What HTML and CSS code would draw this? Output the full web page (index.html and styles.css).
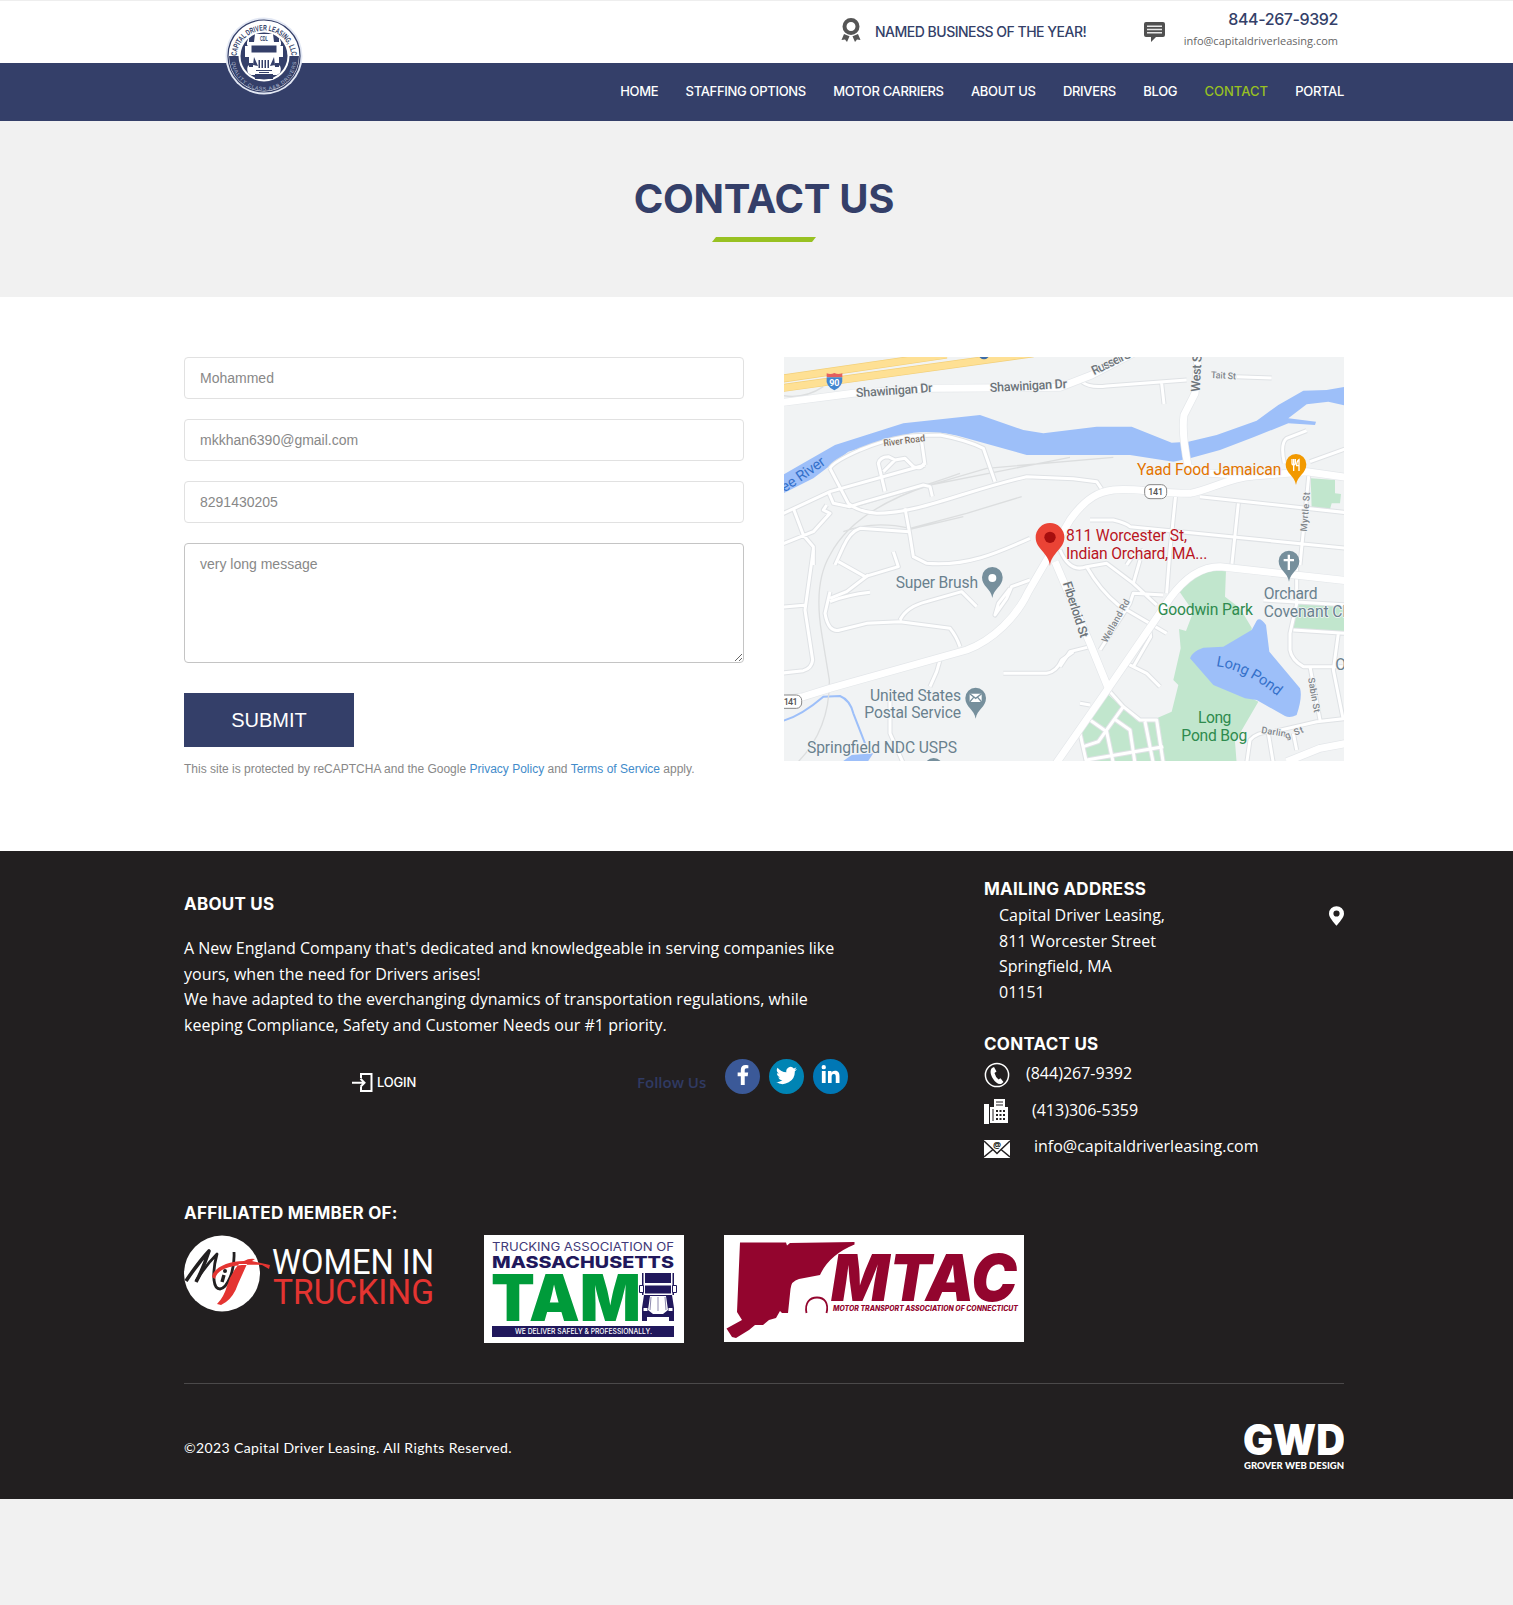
FILE: index.html
```html
<!DOCTYPE html>
<html lang="en">
<head>
<meta charset="utf-8">
<title>Contact Us - Capital Driver Leasing</title>
<link rel="stylesheet" href="styles.css">
</head>
<body>
<header class="header">
  <div class="topbar wrap">
    <a class="brand" href="#" aria-label="Capital Driver Leasing">
      <svg width="78" height="78" viewBox="0 0 78 78">
        <defs>
          <path id="arc-top" d="M11.500 41A27.500 27.500 0 0 1 66.500 41"/>
          <path id="arc-bottom" d="M6.500 41A32.500 32.500 0 0 0 71.500 41"/>
        </defs>
        <circle cx="39" cy="39" r="38.500" fill="#e3e8f4"/>
        <circle cx="39" cy="39" r="36" fill="#fff" stroke="#343f69" stroke-width="1.200"/>
        <path d="M4 39a35 35 0 0 0 70 0z" fill="#343f69"/>
        <circle cx="39" cy="39" r="25.500" fill="#fff"/>
        <circle cx="39" cy="39" r="23.500" fill="#343f69"/>
        <path d="M30 17h18l1 8h5v-5l2 5v3l-2 2v18q3 2 1 8l-3 2h-4l-2 4H32l-2-4h-4l-3-2q-2-6 1-8V30l-2-2v-3l2-5v5h5zM20 29h4v11h-4zM54 29h4v11h-4z" fill="#fff"/>
        <path d="M26.500 28.500h25v7h-25zM29 40l4 9-5-1zM49 40l-4 9 5-1zM33.500 43H35v8h-1.500zM36.500 43H38v8h-1.500zM39.500 43H41v8h-1.500zM42.500 43H44v8h-1.500zM31 53h16v1H31zM34 55h10v1H34zM30 57h18v5H30zM24 46h4v4h-4zM50 46h4v4h-4z" fill="#343f69"/>
        <text x="39" y="24" class="brand-cdl" text-anchor="middle" textLength="8" lengthAdjust="spacingAndGlyphs">CDL</text>
        <text class="brand-top"><textPath href="#arc-top" startOffset="2" textLength="82" lengthAdjust="spacingAndGlyphs">CAPITAL DRIVER LEASING, LLC</textPath></text>
        <text class="brand-bottom"><textPath href="#arc-bottom" startOffset="4" textLength="94">QUALITY CLASS A&amp;B DRIVERS</textPath></text>
      </svg>
    </a>
    <div class="award">
      <svg width="20" height="25" viewBox="0 0 20 25" fill="#555"><path fill-rule="evenodd" d="M10 0a8.500 8.500 0 1 0 0 17 8.500 8.500 0 0 0 0-17m0 4a4.500 4.500 0 1 1 0 9 4.500 4.500 0 0 1 0-9M3 16l5.500 2.300L6 24l-2-2.500L.5 22zM17 16l-5.500 2.300L14 24l2-2.500 3.500.5z"/></svg>
      <span class="award-text">NAMED BUSINESS OF THE YEAR!</span>
    </div>
    <svg class="chat" width="21" height="20" viewBox="0 0 21 20"><path d="M2 0h17a2 2 0 0 1 2 2v11a2 2 0 0 1-2 2h-7l-5 5v-5H2a2 2 0 0 1-2-2V2a2 2 0 0 1 2-2" fill="#505050"/><path d="M3 4.200h15M3 7.500h15M3 10.800h15" stroke="#e8e8e8" stroke-width="1.500"/></svg>
    <div class="reach"><a class="phone" href="#">844-267-9392</a><a class="mail" href="#">info@capitaldriverleasing.com</a></div>
  </div>
  <div class="navbar">
    <nav class="nav wrap">
      <a href="#">HOME</a><a href="#">STAFFING OPTIONS</a><a href="#">MOTOR CARRIERS</a><a href="#">ABOUT US</a><a href="#">DRIVERS</a><a href="#">BLOG</a><a href="#" class="active">CONTACT</a><a href="#">PORTAL</a>
    </nav>
  </div>
</header>

<section class="hero">
  <h1>CONTACT US</h1>
  <div class="hero-bar"></div>
</section>

<main class="main">
  <div class="contact wrap">
    <form class="form">
      <input type="text" value="Mohammed" aria-label="Name">
      <input type="text" value="mkkhan6390@gmail.com" aria-label="Email">
      <input type="text" value="8291430205" aria-label="Phone">
      <textarea aria-label="Message">very long message</textarea>
      <button type="button">SUBMIT</button>
      <p class="legal">This site is protected by reCAPTCHA and the Google <a href="#">Privacy Policy</a> and <a href="#">Terms of Service</a> apply.</p>
    </form>
    <svg class="map" width="560" height="404" viewBox="12 21 1680 1212">
      <defs>
        <g id="minor">
          <path d="M0 495L150 425 435 345M435 345L425 275M150 355L205 460Q235 485 290 490C420 490 560 420 740 380L880 386 950 395 970 425M150 355Q160 335 240 300C350 255 400 255 480 255Q560 270 610 295L645 395"/>
          <path d="M315 425L295 340Q300 320 325 320L345 330 375 325 400 350Q425 360 432 340M310 365L345 330M40 475L70 555 100 590V645M145 425L160 460 210 470 240 460 430 405 450 410 457 440M0 585L100 545 150 490 130 480 140 465M375 475L388 545 400 620 440 640C560 650 650 610 750 565"/>
          <path d="M388 545L240 535Q210 545 190 590L165 645M340 605L355 650 255 680 175 635M0 772L80 765M100 600L75 780 98 930Q95 955 70 962L0 970"/>
          <path d="M150 725L135 790Q145 850 180 840L260 820 360 815 510 835Q530 860 540 890M150 755Q200 735 270 727M360 810Q380 770 440 755L545 725 590 770M265 675L200 725 150 745M750 690L695 710 680 745 645 795 655 760 690 715M480 930L470 965 450 1010M670 970H800Q830 965 845 930L880 905M330 1020V1150L370 1240"/>
          <path d="M905 95Q930 115 980 108L1220 90M1145 100L1152 162M1370 80L1475 84M1580 242L1520 265Q1500 280 1513 340M1590 335L1700 295M1260 440L1700 488M1187 435L1170 600 1160 730M1375 460L1355 650M930 510H1000Q1040 520 1050 530L1700 595M1587 370L1560 645M1040 645L1060 615 1090 600"/>
          <path d="M840 600Q870 670 920 650L980 640 1060 700M920 650Q960 720 1015 765L1160 850M1080 630L1060 700 1130 765M960 900L1050 760 1060 730 1150 735M840 950L870 905 930 890M1040 940L1110 845 1112 860 1060 950M1040 940L1100 970 1140 1010M900 1060L930 1065"/>
          <path d="M1550 650V760L1530 850V900Q1535 930 1570 950L1700 950M1450 750L1700 765M1540 840L1700 850M1590 950L1620 1110M1675 850L1660 960 1690 1110M1400 1240L1410 1170Q1430 1145 1480 1145L1610 1115 1700 1105M1465 1150L1480 1240M1540 1150L1550 1200"/>
          <path d="M990 1025L1030 1070 1080 1110H1130L1150 1240M930 1110L980 1145 1000 1240M910 1190L955 1175 1030 1070M900 1150L920 1240M1000 1105L1050 1140 1065 1240M1095 1115L1120 1240M920 1230L1150 1190"/>
        </g>
        <g id="major">
          <path d="M0 1050L70 1040 150 1015 560 900C640 870 710 800 745 725L870 510C920 440 960 425 1000 420C1060 412 1120 430 1230 430C1290 420 1340 385 1420 378L1580 365 1700 382"/>
          <path d="M825 635L930 880 985 1015M825 1245L985 1015 1170 745C1220 675 1270 650 1320 650L1700 692"/>
          <path d="M0 158L220 130 460 115 840 112 935 75 1060 10M1255 10L1245 130 1212 195Q1204 250 1225 352L1290 370 1420 378M1520 1235L1620 1195 1700 1180"/>
        </g>
        <path id="pin" d="M0 0C-4-28-31-34-31-62a31 31 0 0 1 62 0C31-34 4-28 0 0z"/>
        <path id="arc-river" d="M14 427Q70 392 150 333"/>
        <path id="arc-pond" d="M1308 948Q1400 960 1500 1045"/>
      </defs>
      <path class="land" d="M0 0h1700v1250H0z"/>
      <g class="park">
        <path d="M1195 720C1240 675 1280 660 1338 660L1335 740 1380 775 1415 833V1045L1435 1055 1365 1175 1370 1240H1150L1130 1105 1175 1085 1195 1005 1180 990 1202 895 1197 837 1218 843 1240 785zM980 1030L1025 1070 1075 1115H1130L1145 1240H925L905 1145zM1592 385L1665 390V430L1683 432 1680 460H1655L1650 478 1595 475zM1545 760L1700 770V850L1540 835z"/>
      </g>
      <g class="water">
        <path d="M0 380L60 345 165 285 370 220 600 195 730 240 790 250 870 240 950 230H1055L1175 278 1225 275 1310 255 1430 212 1495 165 1570 122 1640 120 1700 110V168L1645 155 1580 163 1525 205 1608 215 1605 225 1525 220 1420 262 1320 300 1230 325 1180 335 1050 315H740L560 265Q480 240 400 248L290 280 205 305 100 385 0 435z"/>
        <path d="M1230 925Q1235 905 1270 893L1330 890 1415 840 1430 812Q1440 800 1458 825L1468 905 1560 1015Q1568 1040 1550 1095 1530 1105 1515 1098L1430 1050 1395 1045 1300 1005zM180 1240L215 1215 280 1210 260 1240z"/>
      </g>
      <path d="M0 1115Q60 1100 130 1040L180 1038Q210 1050 220 1090L255 1180" fill="none" stroke="#9dbff9" stroke-width="6"/>
      <g class="rail"><path d="M200 475Q400 420 540 370M210 475L620 355 1000 322M150 615Q220 480 450 405L870 322M190 545Q280 510 390 535L560 490 725 440M380 540L550 500M150 615Q100 700 125 850L148 990Q150 1140 50 1240M0 135Q70 150 130 110"/></g>
      <use href="#minor" class="minor-edge"/><use href="#minor" class="minor"/>
      <use href="#major" class="major-edge"/><use href="#major" class="major"/>
      <path d="M0 87L500 14M0 115L760 10" class="highway-edge"/><path d="M0 87L500 14M0 115L760 10" class="highway"/>
      <circle cx="612" cy="12" r="16" fill="#3c6ca8"/>
      <path d="M140 82h47q3 28-24 39-27-11-23-39" fill="#4285d0"/><path d="M140 70q12 5 23-1 12 6 24 1v11h-47z" fill="#e4605e"/>
      <text x="163" y="107" class="shield" text-anchor="middle">90</text>
      <g class="badge"><rect x="1094" y="404" width="66" height="42" rx="16"/><rect x="-4" y="1035" width="69" height="40" rx="16"/></g>
      <text x="1105" y="435" class="route" textLength="44">141</text><text x="11" y="1066" class="route" textLength="42">141</text>
      <g class="street">
        <text transform="translate(229 142) rotate(-4)" textLength="230">Shawinigan Dr</text>
        <text transform="translate(630 126) rotate(-3)" textLength="232">Shawinigan Dr</text>
        <text transform="translate(942 76) rotate(-26)" textLength="136">Russell St</text>
        <text transform="translate(1259 126) rotate(-87)" textLength="124">West St</text>
        <text transform="translate(848 700) rotate(72)" textLength="174">Fiberloid St</text>
      </g>
      <g class="lane">
        <text transform="translate(311 289) rotate(-7)" textLength="126" fill="#7b6d62">River Road</text>
        <text transform="translate(1292 84) rotate(3)" textLength="76">Tait St</text>
        <text transform="translate(1580 545) rotate(-85)" textLength="118">Myrtle St</text>
        <text transform="translate(980 880) rotate(-61)" textLength="144">Welland Rd</text>
        <text transform="translate(1584 985) rotate(80)" textLength="105">Sabin St</text>
        <text transform="translate(1443 1149) rotate(9)" textLength="74">Darlin</text><text transform="translate(1519 1168) rotate(-22)" textLength="58">g St</text>
      </g>
      <g class="river"><text><textPath href="#arc-river" textLength="152">ee River</textPath></text><text><textPath href="#arc-pond" textLength="208">Long Pond</textPath></text></g>
      <g class="place green"><text x="1133" y="795" textLength="286">Goodwin Park</text><text x="1254" y="1119" textLength="100">Long</text><text x="1204" y="1173" textLength="198">Pond Bog</text></g>
      <g class="place slate">
        <text x="347" y="715" textLength="247">Super Brush</text><text x="270" y="1052" textLength="273">United States</text><text x="253" y="1104" textLength="290">Postal Service</text><text x="81" y="1208" textLength="450">Springfield NDC USPS</text>
        <text x="1451" y="747" textLength="162">Orchard</text><text x="1451" y="800" textLength="262">Covenant Ch</text><text x="1666" y="960">O</text>
      </g>
      <text x="1071" y="376" class="place amber" textLength="433">Yaad Food Jamaican</text>
      <g class="place red"><text x="858" y="573" textLength="363">811 Worcester St,</text><text x="858" y="627" textLength="424">Indian Orchard, MA...</text></g>
      <g fill="#768f9c"><use href="#pin" x="637" y="744"/><use href="#pin" x="587" y="1106"/><use href="#pin" x="1527" y="695"/><circle cx="461" cy="1252" r="28"/></g>
      <circle cx="637" cy="684" r="12" fill="#fff"/>
      <path d="M569 1031h36v25h-36zM1523 614h7v13h12v7h-12v26h-7v-26h-12v-7h12z" fill="#fff"/><path d="M569 1031l18 14 18-14M569 1056l12-14M605 1056l-12-14" fill="none" stroke="#768f9c" stroke-width="4"/>
      <use href="#pin" x="1548" y="405" fill="#f29900"/>
      <path d="M1536 327v12q0 6 5 6v18M1541 327v18M1546 327v12q0 6-5 6M1557 363v-34q-7 4-7 18h7" fill="none" stroke="#fff" stroke-width="4"/>
      <path d="M810 648C806 608 767 598 767 562a43 43 0 0 1 86 0C853 598 814 608 810 648z" fill="#ea4335"/><circle cx="810" cy="562" r="17" fill="#a50e0e"/>
    </svg>
  </div>
</main>

<footer class="footer">
  <div class="wrap">
    <div class="foot-top">
      <section class="about">
        <h2>ABOUT US</h2>
        <p>A New England Company that's dedicated and knowledgeable in serving companies like<br>yours, when the need for Drivers arises!<br>We have adapted to the everchanging dynamics of transportation regulations, while<br>keeping Compliance, Safety and Customer Needs our #1 priority.</p>
        <div class="links">
          <a class="login" href="#"><svg width="21" height="20" viewBox="0 0 21 20" fill="none" stroke="#fff" stroke-width="2"><path d="M9 5V1h10.500v17H9v-4M0 9.700h12M8.500 5.700l4 4-4 4"/></svg><span>LOGIN</span></a>
          <span class="follow">Follow Us</span>
          <div class="social">
            <a class="fb" href="#" aria-label="Facebook"><svg width="20" height="20" viewBox="0 0 320 512" fill="#fff"><path d="M279 288l14-93h-89v-60c0-25 12-50 52-50h41V7s-37-7-72-7c-73 0-121 44-121 125v70H23v93h81v224h100V288z"/></svg></a>
            <a class="tw" href="#" aria-label="Twitter"><svg width="21" height="21" viewBox="0 0 24 24" fill="#fff"><path d="M24 4.600a10 10 0 0 1-2.800.8 5 5 0 0 0 2.200-2.700c-1 .6-2 1-3.100 1.200a4.900 4.900 0 0 0-8.400 4.500C7.800 8.200 4.200 6.200 1.700 3.200a4.900 4.900 0 0 0 1.500 6.500c-.8 0-1.600-.2-2.200-.6 0 2.300 1.600 4.400 3.900 4.900-.7.200-1.500.2-2.200.1a4.900 4.900 0 0 0 4.600 3.400A9.900 9.900 0 0 1 0 19.500 14 14 0 0 0 21.500 7.100c1-.7 1.800-1.600 2.500-2.500"/></svg></a>
            <a class="li" href="#" aria-label="LinkedIn"><svg width="19" height="18" viewBox="0 0 24 24" fill="#fff"><path d="M.5 8h5v16h-5zM3 0a2.900 2.900 0 1 1 0 5.800A2.900 2.900 0 0 1 3 0M8.600 8h4.700v2.200C14 8.800 15.600 7.600 18 7.600c5 0 6 3.300 6 7.600V24h-5v-7.800c0-1.900 0-4.200-2.600-4.200s-2.900 2-2.900 4.100V24H8.600z"/></svg></a>
          </div>
        </div>
      </section>
      <section class="info">
        <h2>MAILING ADDRESS</h2>
        <div class="address">
          <p>Capital Driver Leasing,<br>811 Worcester Street<br>Springfield, MA<br>01151</p>
          <svg width="15" height="20" viewBox="0 0 16 21" fill="#fff"><path fill-rule="evenodd" d="M8 0a8 8 0 0 0-8 8c0 4 5 9 8 13 3-4 8-9 8-13a8 8 0 0 0-8-8m0 4.500a3.300 3.300 0 1 1 0 6.600 3.300 3.300 0 0 1 0-6.600"/></svg>
        </div>
        <h2 class="reach-title">CONTACT US</h2>
        <ul>
          <li class="tel"><svg width="26" height="26" viewBox="0 0 26 26"><circle cx="13" cy="13" r="11.600" fill="none" stroke="#fff" stroke-width="1.500"/><path d="M8 6l2-1 2.500 4.500-2 1.500q1 4 4 6.500l2-1.200 3 3.700-2 1.800c-3 1-6-1-8.500-5C6 12 6 8 8 6" fill="#fff"/></svg><span>(844)267-9392</span></li>
          <li class="fax"><svg width="25" height="25" viewBox="0 0 25 25"><path d="M0 5h5v20H0zM6 8h4V0h11v8h3v16H6z" fill="#fff"/><path d="M12 3h7M12 6h7M9 10v12" stroke="#221f20"/><path d="M12 12h9M12 16h9M12 20h9" stroke="#221f20" stroke-width="2" stroke-dasharray="2 1.500"/></svg><span>(413)306-5359</span></li>
          <li class="email"><svg width="26" height="18" viewBox="0 0 26 18"><path d="M0 0h26v18H0z" fill="#fff"/><path d="M0 1l10 9.500 3 3 3-3L26 1M0 17l9-7.500M26 17l-9-7.500" fill="none" stroke="#221f20" stroke-width="1.500"/><text x="13" y="8" text-anchor="middle" class="at">@</text></svg><span>info@capitaldriverleasing.com</span></li>
        </ul>
      </section>
    </div>

    <h2 class="member-title">AFFILIATED MEMBER OF:</h2>
    <div class="members">
      <svg class="wit" width="251" height="78" viewBox="0 0 251 78">
        <circle cx="38" cy="38.500" r="38" fill="#fff"/>
        <path d="M2 46Q14 28 25 16q-6 18-13 31" fill="none" stroke="#221f20" stroke-width="3.600" stroke-linejoin="round"/>
        <path d="M12 46Q22 30 33 19q-4 14-3 26 1 9 6 9c7-1 15-17 14-37" fill="none" stroke="#221f20" stroke-width="2.800" stroke-linejoin="round"/>
        <path d="M38 47l2-7" stroke="#221f20" stroke-width="3.400"/><circle cx="41" cy="36" r="2" fill="#221f20"/>
        <path d="M31 44C34 30 58 29 78 30l7 4 1-4-18-4 3-2q-6-1-11 2C44 26 29 33 28 42zM63 29L54 49q-4 12-12 18l-5 3-4-1q7-7 10-18 4-13 12-22z" fill="#e43431"/>
        <text x="88" y="38.500" class="wit-text" fill="#fff" textLength="162" lengthAdjust="spacingAndGlyphs">WOMEN IN</text>
        <text x="89" y="69" class="wit-text" fill="#e43431" textLength="161" lengthAdjust="spacingAndGlyphs">TRUCKING</text>
      </svg>
      <svg class="tam" width="200" height="108" viewBox="0 0 200 108">
        <path d="M0 0h200v108H0z" fill="#fff"/>
        <text x="8" y="15.500" class="tam-one" textLength="182" lengthAdjust="spacingAndGlyphs">TRUCKING ASSOCIATION OF</text>
        <text x="8" y="32.500" class="tam-two" textLength="182" lengthAdjust="spacingAndGlyphs">MASSACHUSETTS</text>
        <text x="7" y="85.500" class="tam-big" textLength="150" lengthAdjust="spacingAndGlyphs">TAM</text>
        <path d="M158 37h32v49h-32z" fill="#fff"/>
        <path d="M161 38h26v10h-26zM161 50.500h26v8h-26zM158 38h1.500v22H158zM188.500 38h1.500v22h-1.500zM160 60h28l2 13v13h-5v-4h-22v4h-5V73z" fill="#21185c"/>
        <path d="M155.500 50.500h4v7h-4zM188.500 50.500h4v7h-4z" fill="#fff" stroke="#21185c"/>
        <path d="M166 61h16l2 14-5 4h-10l-5-4zM159.500 73h4v3h-4zM184.500 73h4v3h-4z" fill="#fff"/><path d="M174 62v14M167 62l-1 13M181 62l1 13" stroke="#8e8aae"/>
        <path d="M8 91h182v11H8z" fill="#21185c"/>
        <text x="31" y="99" class="tam-bar" textLength="137" lengthAdjust="spacingAndGlyphs">WE DELIVER SAFELY &amp; PROFESSIONALLY.</text>
      </svg>
      <svg class="mtac" width="300" height="107" viewBox="0 0 300 107">
        <path d="M0 0h300v107H0z" fill="#fff"/>
        <path d="M16 7.500h46l1 3 3-2.500 64.500-1v2.500Q105 20 96 40l-21 4q-8 2-8.500 10L64 78h-6l-2-2-4 7-7 2-6 5-8 0-6 5-13 8-4-1-5.500-8.500L18 85l-5-8z" fill="#93052e"/>
        <path d="M82.500 78c-2-10 3-15.500 10.500-15.500S105 68 102.500 78" fill="none" stroke="#93052e" stroke-width="1.800"/>
        <text x="107" y="65.500" class="mtac-big" textLength="186" lengthAdjust="spacingAndGlyphs">MTAC</text>
        <text x="109" y="75.800" class="mtac-small" textLength="185" lengthAdjust="spacingAndGlyphs">MOTOR TRANSPORT ASSOCIATION OF CONNECTICUT</text>
      </svg>
    </div>

    <div class="bottom">
      <p>©2023 Capital Driver Leasing. All Rights Reserved.</p>
      <svg class="gwd" width="100" height="46" viewBox="0 0 100 46" fill="#fff">
        <text x="-1" y="31" class="gwd-big" textLength="102" lengthAdjust="spacingAndGlyphs">GWD</text>
        <text x="0" y="45" class="gwd-small" textLength="100" lengthAdjust="spacingAndGlyphs">GROVER WEB DESIGN</text>
      </svg>
    </div>
  </div>
</footer>
</body>
</html>
```
FILE: styles.css
```css
* { box-sizing: border-box; }
body { margin: 0; background: #f1f1f1; color: #333; font-family: "Open Sans", sans-serif; }
a { color: inherit; text-decoration: none; }
h1, h2, p, ul { margin: 0; padding: 0; }
ul { list-style: none; }
svg { display: block; flex: none; }
.wrap { width: 1160px; margin-left: 184px; }

.header { background: #fff; border-top: 1px solid #eee; }
.topbar { height: 62px; display: flex; align-items: flex-start; position: relative; padding-right: 6px; }
.brand { position: absolute; left: 41px; top: 16px; z-index: 2; }
.brand text { font-family: "Liberation Sans", sans-serif; fill: #343f69; }
.brand-cdl { font-size: 7px; font-weight: bold; }
.brand .brand-top { font-size: 8px; font-weight: bold; }
.brand .brand-bottom { font-size: 5px; fill: #b9c0d8; }
.award { display: flex; margin: 17px 0 0 auto; }
.award-text { margin: 3px 0 0 14px; width: 212px; white-space: nowrap; color: #343f69; font: 500 14px/22px Inter, sans-serif; letter-spacing: -.5px; }
.chat { margin: 21px 19px 0 57px; }
.reach { display: flex; flex-direction: column; width: 154px; align-items: flex-end; padding-top: 7px; white-space: nowrap; }
.phone { color: #343f69; font: 500 16px/22px Inter, sans-serif; letter-spacing: -.4px; }
.mail { color: #666; font-size: 11px; line-height: 22px; }
.navbar { background: #343f69; height: 58px; }
.nav { display: flex; justify-content: flex-end; gap: 27.300px; color: #fff; font: 500 13px/57px Inter, sans-serif; letter-spacing: -.32px; white-space: nowrap; }
.nav .active { color: #98c122; letter-spacing: 0; }

.hero { height: 176px; background: #f1f1f1; display: flex; flex-direction: column; align-items: center; padding-left: 15px; }
.hero h1 { color: #343f69; font: 700 40px/48px Inter, sans-serif; letter-spacing: -.3px; margin-top: 54px; white-space: nowrap; }
.hero-bar { width: 104px; height: 5px; margin-top: 14px; background: #98c122; clip-path: polygon(4px 0, 100% 0, 100px 100%, 0 100%); }

.main { background: #fff; height: 554px; padding-top: 60px; }
.contact { display: flex; justify-content: space-between; }
.form { width: 560px; display: flex; flex-direction: column; font-family: "Liberation Sans", sans-serif; }
.form input, .form textarea { width: 100%; height: 42px; margin: 0 0 20px; padding: 0 15px; border: 1px solid #e1e1e1; border-radius: 4px; background: #fff; color: #888; font: 14px/20px "Liberation Sans", sans-serif; }
.form textarea { height: 120px; margin-bottom: 30px; padding: 10px 15px; border-color: #c4c4c4; resize: vertical; }
.form button { width: 170px; height: 54px; border: 0; background: #343f69; color: #fff; font: 20px "Liberation Sans", sans-serif; padding: 0; }
.legal { margin-top: 13px; color: #888; font-size: 12px; line-height: 18px; white-space: nowrap; }
.legal a { color: #428bca; }

.map { overflow: hidden; font-family: Roboto, sans-serif; }
.land { fill: #f1f3f4; }
.park { fill: #c1e6cd; }
.water { fill: #9dbff9; }
.map .rail, .map .minor, .map .minor-edge, .map .major, .map .major-edge, .highway, .highway-edge { fill: none; stroke-linejoin: round; }
.rail { stroke: #dcdedf; stroke-width: 4; }
.minor-edge { stroke: #dfe2e5; stroke-width: 15; }
.minor { stroke: #fff; stroke-width: 9; }
.major-edge { stroke: #e4e7ea; stroke-width: 25; }
.major { stroke: #fff; stroke-width: 21; }
.highway-edge { stroke: #f2cf78; stroke-width: 24; }
.highway { stroke: #fee094; stroke-width: 20; }
.shield { fill: #fff; font-size: 27px; font-weight: 700; }
.badge { fill: #fff; stroke: #888; stroke-width: 3; }
.route { fill: #555; font-size: 27px; font-weight: 500; }
.street, .lane, .place, .river { stroke: #f3f5f6; stroke-width: 5; paint-order: stroke; stroke-linejoin: round; }
.street { fill: #6d747a; font-size: 38px; font-weight: 500; }
.lane { fill: #81868b; font-size: 28px; font-weight: 500; }
.river { fill: #3571ca; stroke: none; font-size: 44px; }
.place { font-size: 47px; }
.green { fill: #2e8b4e; stroke: none; }
.slate { fill: #6a818e; }
.amber { fill: #e37400; }
.red { fill: #b9151f; }

.footer { background: #221f20; color: #fff; height: 648px; }
.footer h2 { font: 700 17px/26px Inter, sans-serif; letter-spacing: .25px; white-space: nowrap; }
.foot-top { display: flex; height: 345px; }
.about { width: 800px; padding-top: 40px; }
.about p, .address p { font-size: 16px; line-height: 25.6px; white-space: nowrap; }
.about p { margin-top: 19px; }
.links { display: flex; margin-top: 21px; }
.login { display: flex; margin: 14px 0 0 168px; width: 285px; font: 500 13px/18px Inter, sans-serif; letter-spacing: -.2px; }
.login span { margin-left: 4px; }
.follow { width: 88px; color: #303a63; font-size: 15px; font-weight: 600; line-height: 22px; margin-top: 12px; white-space: nowrap; }
.social { display: flex; gap: 9px; }
.social a { width: 35px; height: 35px; border-radius: 50%; display: flex; justify-content: center; padding-top: 6px; }
.fb { background: #3b5998; }
.tw { background: #0084b4; }
.li { background: #0077b5; }
.info { width: 360px; padding-top: 25px; }
.address { display: flex; justify-content: space-between; padding: 1px 0 0 15px; }
.address svg { margin-top: 3px; }
.footer .reach-title { margin-top: 26px; }
.info li { display: flex; white-space: nowrap; font-size: 16px; line-height: 26px; }
.info li span { margin-top: -2px; }
.tel { height: 37px; padding-top: 5px; }
.tel span { margin-left: 16px; }
.fax { height: 36px; padding-top: 5px; }
.fax span { margin-left: 23px; }
.email { padding-top: 10px; }
.info .email span { margin: -7px 0 0 24px; }
.at { font-size: 9px; font-weight: 700; fill: #221f20; }
.footer .member-title { margin-top: 4px; }
.members { display: flex; margin-top: 9px; height: 149px; border-bottom: 1px solid #4b494a; }
.tam { margin-left: 49px; }
.mtac { margin-left: 40px; }
.wit-text { font: 400 35px Roboto, sans-serif; stroke: currentColor; stroke-width: 0; }
.tam-one { font: 400 12px Inter, sans-serif; fill: #413978; }
.tam-two { font: 800 16.500px Inter, sans-serif; fill: #21185c; }
.tam-big { font: 900 65px Inter, sans-serif; fill: #009b3a; }
.tam-bar { font: 500 7px Inter, sans-serif; fill: #fff; }
.mtac-big { font: italic 900 65px Inter, sans-serif; fill: #93052e; }
.mtac-small { font: italic 800 7px Inter, sans-serif; fill: #93052e; }
.bottom { display: flex; justify-content: space-between; padding-top: 40px; }
.bottom p { font: 14px/22px Lato, sans-serif; letter-spacing: .38px; margin-top: 13px; }
.gwd-big { font: 900 42px Inter, sans-serif; }
.gwd-small { font: 900 10px Lato, sans-serif; }
```
